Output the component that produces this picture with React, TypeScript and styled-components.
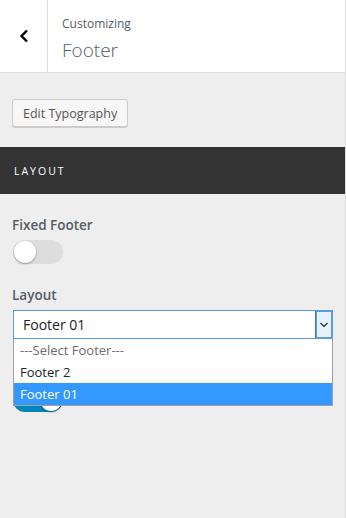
import React from 'react';
import styled, { createGlobalStyle } from 'styled-components';

const GlobalStyle = createGlobalStyle`
  html, body {
    margin: 0;
    padding: 0;
    background: #eeeeee;
    font-family: 'Open Sans', 'Noto Sans', sans-serif;
  }
`;

const Panel = styled.div`
  width: 345px;
  min-height: 518px;
  background: #eeeeee;
  border-right: 1px solid #dddddd;
`;

const Header = styled.div`
  display: flex;
  height: 72px;
  background: #ffffff;
  border-bottom: 1px solid #dddddd;
`;

const BackButton = styled.div`
  width: 47px;
  display: flex;
  align-items: center;
  justify-content: center;
  border-right: 1px solid #dddddd;
`;

const TitleBlock = styled.div`
  display: flex;
  flex-direction: column;
  justify-content: center;
  padding: 7px 0 0 14px;
  color: #555d66;
`;

const Kicker = styled.span`
  font-size: 12px;
  line-height: 16px;
`;

const Title = styled.span`
  font-size: 19px;
  font-weight: 300;
  line-height: 28px;
  margin-top: 4px;
`;

const Body = styled.div`
  padding: 26px 0 0;
`;

const ButtonRow = styled.div`
  padding: 0 12px;
`;

const Button = styled.button`
  height: 28px;
  padding: 0 10px;
  font-family: inherit;
  font-size: 12.5px;
  color: #555555;
  background: #f7f7f7;
  border: 1px solid #cccccc;
  border-radius: 3px;
  box-shadow: 0 1px 0 #cccccc;
`;

const SectionBar = styled.div`
  margin-top: 20px;
  height: 47px;
  background: #333333;
  color: #ffffff;
  display: flex;
  align-items: center;
  padding-left: 14px;
  font-size: 10.5px;
  letter-spacing: 2px;
  text-transform: uppercase;
`;

const Control = styled.div<{ $gap?: number }>`
  padding: 0 12px;
  margin-top: ${(p) => p.$gap ?? 0}px;
`;

const Label = styled.div`
  font-size: 13.5px;
  font-weight: 600;
  color: #555d66;
  line-height: 20px;
  margin-bottom: 5px;
`;

const Toggle = styled.span<{ $on?: boolean }>`
  position: relative;
  display: block;
  width: 50px;
  height: 24px;
  margin-left: 1px;
  border-radius: 12px;
  background: ${(p) => (p.$on ? '#0085ba' : '#dddddd')};
  &::after {
    content: '';
    position: absolute;
    top: 1px;
    left: ${(p) => (p.$on ? '27px' : '1px')};
    width: 22px;
    height: 22px;
    border-radius: 50%;
    background: #ffffff;
    box-shadow: 0 1px 2px rgba(0, 0, 0, 0.35);
  }
`;

const SelectWrap = styled.div`
  position: relative;
  margin-left: 1px;
`;

const SelectBox = styled.div`
  display: flex;
  align-items: center;
  height: 29px;
  box-sizing: border-box;
  border: 1px solid #5b9dd9;
  background: #ffffff;
  font-size: 14px;
  color: #222222;
`;

const SelectValue = styled.span`
  flex: 1;
  padding-left: 9px;
`;

const Arrow = styled.span`
  width: 16px;
  height: 27px;
  display: flex;
  align-items: center;
  justify-content: center;
  background: #e5f1fb;
  border-left: 1px solid #3c7fb1;
  box-shadow: inset 0 0 0 1px #5b9dd9;
`;

const OptionList = styled.ul`
  position: absolute;
  top: 29px;
  left: 0;
  right: 0;
  margin: 0;
  padding: 0;
  list-style: none;
  background: #ffffff;
  border: 1px solid #a0a0a0;
  border-top: none;
  z-index: 10;
`;

const Option = styled.li<{ $selected?: boolean; $muted?: boolean }>`
  height: 22px;
  line-height: 22px;
  padding-left: 6px;
  font-size: 13px;
  color: ${(p) => (p.$selected ? '#ffffff' : p.$muted ? '#6d6d6d' : '#222222')};
  background: ${(p) => (p.$selected ? '#3399ff' : 'transparent')};
`;

export default function App() {
  return (
    <>
      <GlobalStyle />
      <Panel>
        <Header>
          <BackButton>
            <svg width="10" height="14" viewBox="0 0 10 14">
              <path d="M8 1.5 L2.5 7 L8 12.5" fill="none" stroke="#000" strokeWidth="2.4" />
            </svg>
          </BackButton>
          <TitleBlock>
            <Kicker>Customizing</Kicker>
            <Title>Footer</Title>
          </TitleBlock>
        </Header>
        <Body>
          <ButtonRow>
            <Button>Edit Typography</Button>
          </ButtonRow>
          <SectionBar>Layout</SectionBar>
          <Control $gap={21}>
            <Label>Fixed Footer</Label>
            <Toggle />
          </Control>
          <Control $gap={21}>
            <Label>Layout</Label>
            <SelectWrap>
              <SelectBox>
                <SelectValue>Footer 01</SelectValue>
                <Arrow>
                  <svg width="8" height="6" viewBox="0 0 8 6">
                    <path d="M0.5 1 L4 4.5 L7.5 1" fill="none" stroke="#222" strokeWidth="1.2" />
                  </svg>
                </Arrow>
              </SelectBox>
              <OptionList>
                <Option $muted>---Select Footer---</Option>
                <Option>Footer 2</Option>
                <Option $selected>Footer 01</Option>
              </OptionList>
            </SelectWrap>
          </Control>
          <Control $gap={49}>
            <Toggle $on />
          </Control>
        </Body>
      </Panel>
    </>
  );
}
